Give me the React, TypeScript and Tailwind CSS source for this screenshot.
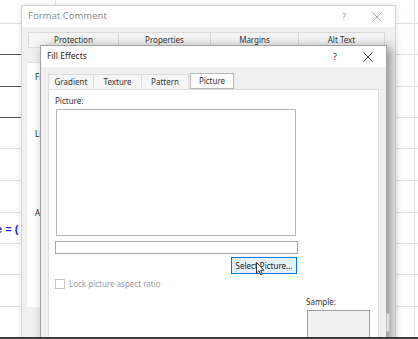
const gridRows = [23, 54, 86, 117, 148, 180, 212, 243, 274, 306];
const darkRows = [54, 86, 117];

function CloseIcon({ color }: { color: string }) {
  return (
    <svg width="10" height="10" viewBox="0 0 10 10">
      <path d="M0.5 0.5 L9.5 9.5 M9.5 0.5 L0.5 9.5" stroke={color} strokeWidth="1" fill="none" />
    </svg>
  );
}

function TitleBar({ title, active }: { title: string; active: boolean }) {
  const color = active ? '#1f1f1f' : '#8f8f8f';
  return (
    <div className="h-[21px] shrink-0 bg-white flex items-center pl-[6px] pr-[13px]">
      <span className={active ? 'text-[8.5px]' : 'text-[9.5px]'} style={{ color }}>
        {title}
      </span>
      <span className="ml-auto mr-[26px] text-[9px]" style={{ color: active ? '#333' : '#a0a0a0' }}>
        ?
      </span>
      <CloseIcon color={active ? '#444' : '#a8a8a8'} />
    </div>
  );
}

function FormatComment() {
  const tabs = [
    { label: 'Protection', w: 'w-[91px]' },
    { label: 'Properties', w: 'w-[93px]' },
    { label: 'Margins', w: 'w-[89px]' },
    { label: 'Alt Text', w: 'w-[87px]' },
  ];
  return (
    <div className="absolute left-[21px] top-[5px] w-[375px] h-[360px] bg-[#f0f0f0] border border-[#d6d6d6] shadow-[0_0_6px_rgba(0,0,0,0.12)]">
      <TitleBar title="Format Comment" active={false} />
      <div className="pt-[5px] pl-[5px] flex flex-col">
        <div className="flex ml-[1px] h-[16px]">
          {tabs.map((t) => (
            <div
              key={t.label}
              className={`${t.w} flex items-center justify-center bg-[#f5f5f5] border border-[#dadada] -ml-px first:ml-0 text-[8px] text-[#333]`}
            >
              {t.label}
            </div>
          ))}
        </div>
        <div className="h-[14px]" />
        <div className="w-[340px] h-[245px] bg-white border-t border-[#e0e0e0] pl-[8px] pt-[8px] flex flex-col text-[8px] text-[#222]">
          <span>Fill</span>
          <span className="mt-[45px]">Line</span>
          <span className="mt-[67px]">Arrows</span>
        </div>
      </div>
    </div>
  );
}

function FillEffects() {
  const tabs = [
    { label: 'Gradient', w: 'w-[46px]' },
    { label: 'Texture', w: 'w-[49px]' },
    { label: 'Pattern', w: 'w-[48px]' },
  ];
  return (
    <div className="absolute left-[40px] top-[45px] w-[347px] bg-[#f0f0f0] border border-[#a3a3a3] shadow-[4px_2px_10px_rgba(0,0,0,0.4)]">
      <TitleBar title="Fill Effects" active />
      <div className="pt-[7px] pl-[7px] flex flex-col">
        <div className="flex items-end h-[15px]">
          {tabs.map((t) => (
            <div
              key={t.label}
              className={`${t.w} h-[15px] flex items-center justify-center bg-[#f6f6f6] border border-b-0 border-[#dcdcdc] -mr-px text-[8px] text-[#333]`}
            >
              {t.label}
            </div>
          ))}
          <div className="w-[44px] h-[16px] ml-[2px] flex items-center justify-center bg-white border border-[#b8b8b8] text-[8px] text-[#333]">
            Picture
          </div>
        </div>
        <div className="w-[331px] bg-white border border-[#dcdcdc] pl-[6px] pt-[6px] pb-[10px] flex flex-col">
          <span className="text-[8px] text-[#333] leading-[10px]">Picture:</span>
          <div className="ml-[1px] mt-[3px] w-[240px] h-[127px] border border-[#b4b4b4] bg-white" />
          <div className="mt-[5px] w-[243px] h-[13px] border border-[#a8a8a8] bg-white" />
          <div className="ml-[176px] mt-[3px] w-[66px] h-[17px] bg-[#e5f1fb] border border-[#0078d7] flex items-center justify-center text-[8px] text-[#222]">
            Select Picture...
          </div>
          <div className="mt-[5px] flex items-center">
            <div className="w-[10px] h-[10px] border border-[#c6c6c6] bg-white" />
            <span className="ml-[4px] text-[8px] text-[#9b9b9b] leading-[10px]">Lock picture aspect ratio</span>
          </div>
          <div className="ml-[251px] mt-[8px] flex flex-col">
            <span className="text-[8px] text-[#333] leading-[10px]">Sample:</span>
            <div className="ml-[1px] mt-[3px] w-[63px] h-[60px] bg-[#f0f0f0] border border-[#a0a0a0]" />
          </div>
        </div>
      </div>
    </div>
  );
}

export default function App() {
  return (
    <div
      className="relative w-[418px] h-[339px] overflow-hidden bg-white"
      style={{ fontFamily: '"Noto Sans", "Open Sans", sans-serif' }}
    >
      {/* spreadsheet behind the dialogs */}
      {gridRows.map((y) => (
        <div key={y} className="absolute left-0 w-[418px] h-px bg-[#e1e1e1]" style={{ top: y }} />
      ))}
      {darkRows.map((y) => (
        <div key={`d${y}`} className="absolute left-0 w-[40px] h-px bg-[#555]" style={{ top: y }} />
      ))}
      <div className="absolute left-[55px] top-0 w-px h-[30px] bg-[#e1e1e1]" />
      <div className="absolute left-[414px] top-0 w-px h-[339px] bg-[#e1e1e1]" />
      <div
        className="absolute left-[-4px] top-[221px] text-[11px] font-bold text-[#2323e6] whitespace-nowrap"
        style={{ fontFamily: '"Liberation Sans", Arial, sans-serif' }}
      >
        e = (
      </div>

      <FormatComment />
      <FillEffects />

      <div className="absolute left-[386px] top-[313px] w-[4px] h-[19px] border border-[#bdbdbd] bg-[#e4e4e4]" />

      {/* mouse cursor */}
      <svg className="absolute left-[256px] top-[262px]" width="9" height="14" viewBox="0 0 9 14">
        <path d="M0.5 0.5 L0.5 11 L3 8.7 L4.8 12.8 L6.4 12.1 L4.7 8.2 L8 8.2 Z" fill="white" stroke="#222" strokeWidth="0.9" strokeLinejoin="round" />
      </svg>

      <div className="absolute left-0 top-[337px] w-[418px] h-[2px] bg-[#3c3c3c]" />
    </div>
  );
}
